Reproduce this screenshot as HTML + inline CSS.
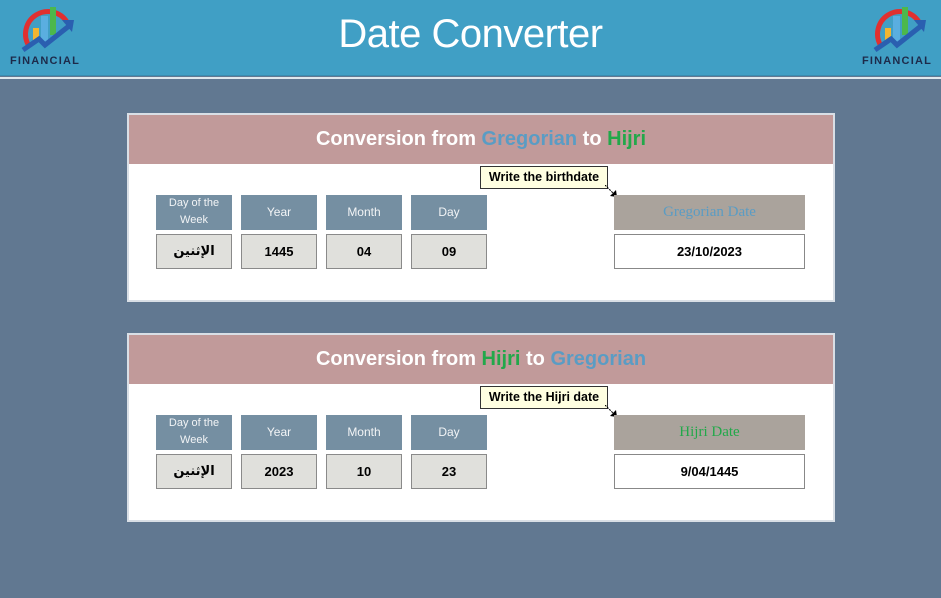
<!DOCTYPE html>
<html><head><meta charset="utf-8"><style>
*{margin:0;padding:0;box-sizing:border-box}
body{width:941px;height:598px;background:#617891;font-family:"Liberation Sans",sans-serif;position:relative;overflow:hidden}
.hdr{position:absolute;left:0;top:0;width:941px;height:76px;background:#409fc5;border-bottom:1px solid #3a8cb0}
.line{position:absolute;left:0;top:77px;width:941px;height:2px;background:#dfe8ee}
.title{position:absolute;left:0;width:941px;top:12px;text-align:center;color:#fff;font-size:40px;font-family:"Liberation Sans",sans-serif;letter-spacing:-0.5px}
.logo{position:absolute;top:2px;width:84px;height:72px}
.logo .t{position:absolute;left:0;top:53px;width:84px;text-align:center;font-size:11px;font-weight:bold;color:#1d2a4a;letter-spacing:1.2px}
.panel{position:absolute;left:127px;width:708px;height:189px;background:#fff;border:2px solid #d9dfe6}
.ph{height:49px;background:#c19a9a;color:#fff;text-align:center;font-size:20px;font-weight:bold;line-height:48px}
.b{color:#5a9cc4}.g{color:#22a84a}
.lab{position:absolute;top:80px;width:76px;height:35px;background:#758fa2;color:#f2f4f6;font-size:12px;text-align:center;line-height:35px}
.val{position:absolute;top:119px;width:76px;height:35px;background:#e0e0dc;border:1px solid #8a8a8a;font-size:13px;font-weight:bold;text-align:center;line-height:33px}
.glab{position:absolute;left:485px;top:80px;width:191px;height:35px;background:#aaa39c;text-align:center;line-height:35px;font-size:15px;font-family:"Liberation Serif",serif}
.gval{position:absolute;left:485px;top:119px;width:191px;height:35px;background:#fff;border:1px solid #888;text-align:center;line-height:33px;font-size:13px;font-weight:bold}
.tip{position:absolute;left:351px;top:51px;width:128px;height:23px;background:#ffffe1;border:1px solid #333;font-size:12.5px;font-weight:bold;text-align:center;line-height:21px;white-space:nowrap}
.arr{position:absolute;left:476px;top:70px}
</style></head><body>
<div class="hdr"></div><div class="line"></div>
<div class="title">Date Converter</div>
<div class="logo" style="left:3px">
<svg width="84" height="55" viewBox="0 0 84 55"><path d="M26 44 A22 22 0 1 1 64 20" fill="none" stroke="#e03030" stroke-width="5"/><rect x="30" y="26" width="6" height="14" fill="#f2b530"/><rect x="38" y="14" width="7" height="26" fill="#5aaee0"/><rect x="47" y="5" width="6" height="28" fill="#4cb84c"/><path d="M20 48 L36 37 L42 43 L66 24" fill="none" stroke="#2a5fb0" stroke-width="5"/><path d="M59 18 L71 18 L69 30 Z" fill="#2a5fb0"/></svg>
<div class="t">FINANCIAL</div></div>
<div class="logo" style="left:855px">
<svg width="84" height="55" viewBox="0 0 84 55"><path d="M26 44 A22 22 0 1 1 64 20" fill="none" stroke="#e03030" stroke-width="5"/><rect x="30" y="26" width="6" height="14" fill="#f2b530"/><rect x="38" y="14" width="7" height="26" fill="#5aaee0"/><rect x="47" y="5" width="6" height="28" fill="#4cb84c"/><path d="M20 48 L36 37 L42 43 L66 24" fill="none" stroke="#2a5fb0" stroke-width="5"/><path d="M59 18 L71 18 L69 30 Z" fill="#2a5fb0"/></svg>
<div class="t">FINANCIAL</div></div>

<div class="panel" style="top:113px">
<div class="ph">Conversion from <span class="b">Gregorian</span> to <span class="g">Hijri</span></div>
<div class="tip">Write the birthdate</div>
<svg class="arr" width="18" height="18"><line x1="0" y1="0" x2="9" y2="9" stroke="#000" stroke-dasharray="2 1"/><path d="M5 11 L12 12 L11 5Z" fill="#000"/><path d="M9 18 L17 10 L17 18Z" fill="#e00"/></svg>
<div class="lab" style="left:27px;line-height:17px;padding-top:0;font-size:11px">Day of the<br>Week</div>
<div class="lab" style="left:112px">Year</div>
<div class="lab" style="left:197px">Month</div>
<div class="lab" style="left:282px">Day</div>
<div class="val" style="left:27px;font-family:'DejaVu Sans',sans-serif">الإثنين</div>
<div class="val" style="left:112px">1445</div>
<div class="val" style="left:197px">04</div>
<div class="val" style="left:282px">09</div>
<div class="glab b">Gregorian Date</div>
<div class="gval">23/10/2023</div>
</div>

<div class="panel" style="top:333px">
<div class="ph">Conversion from <span class="g">Hijri</span> to <span class="b">Gregorian</span></div>
<div class="tip">Write the Hijri date</div>
<svg class="arr" width="18" height="18"><line x1="0" y1="0" x2="9" y2="9" stroke="#000" stroke-dasharray="2 1"/><path d="M5 11 L12 12 L11 5Z" fill="#000"/><path d="M9 18 L17 10 L17 18Z" fill="#e00"/></svg>
<div class="lab" style="left:27px;line-height:17px;padding-top:0;font-size:11px">Day of the<br>Week</div>
<div class="lab" style="left:112px">Year</div>
<div class="lab" style="left:197px">Month</div>
<div class="lab" style="left:282px">Day</div>
<div class="val" style="left:27px;font-family:'DejaVu Sans',sans-serif">الإثنين</div>
<div class="val" style="left:112px">2023</div>
<div class="val" style="left:197px">10</div>
<div class="val" style="left:282px">23</div>
<div class="glab g">Hijri Date</div>
<div class="gval">9/04/1445</div>
</div>
</body></html>
